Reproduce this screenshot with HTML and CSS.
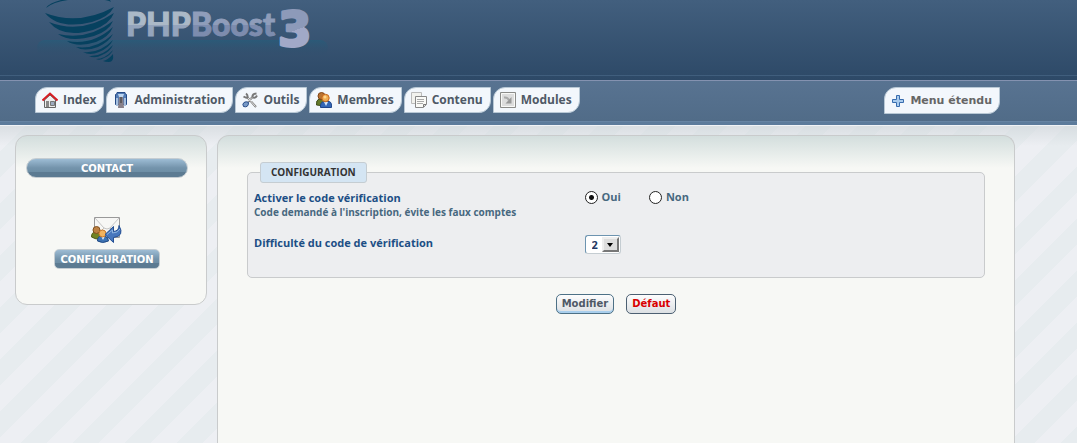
FILE: index.html
```
<!DOCTYPE html>
<html lang="fr">
<head>
<meta charset="utf-8">
<title>PHPBoost 3 - Configuration du contact</title>
<link rel="stylesheet" href="styles.css">
</head>
<body>
<header class="banner">
  <svg class="logo" width="310" height="66" viewBox="0 0 310 66" role="img" aria-label="PHPBoost 3">
    <defs>
      <linearGradient id="php" gradientUnits="userSpaceOnUse" x1="0" y1="12" x2="0" y2="36"><stop offset=".55" stop-color="#abb9c7"/><stop offset=".55" stop-color="#94a4bc"/></linearGradient>
      <linearGradient id="boost" gradientUnits="userSpaceOnUse" x1="0" y1="12" x2="0" y2="36"><stop offset=".55" stop-color="#8f9dba"/><stop offset=".55" stop-color="#7d8cae"/></linearGradient>
      <linearGradient id="three" gradientUnits="userSpaceOnUse" x1="250" y1="9" x2="264" y2="48"><stop offset=".55" stop-color="#8d9ab9"/><stop offset=".55" stop-color="#a1a9c8"/></linearGradient>
      <linearGradient id="glow" x1="0" y1="0" x2="0" y2="1"><stop offset="0" stop-color="#2b5a78"/><stop offset="1" stop-color="#304e6c" stop-opacity="0"/></linearGradient>
    </defs>
    <rect x="0" y="40" width="291" height="16" rx="8" fill="url(#glow)"/>
    <g fill="#06415f">
      <path d="M9 8Q16 2 31 0H24Q12 3 9 8ZM68 0Q73 1 74 2L73 0Z"/>
      <path d="M8 13Q42 26 77 7Q72 17 55 22Q22 30 8 13Z"/>
      <path d="M12 22Q44 35 77 13Q73 24 56 30Q26 39 12 22Z"/>
      <path d="M21 34Q50 41 76 21Q72 31 57 36Q33 43 21 34Z"/>
      <path d="M30 41Q55 46 76 27Q72 37 59 42Q40 48 30 41Z"/>
      <path d="M39 47Q59 50 76 34Q72 42 61 47Q47 52 39 47Z"/>
      <path d="M46 52Q62 54 76 40Q72 48 62 52Q53 56 46 52Z"/>
      <path d="M52 56Q65 57 76 45Q73 52 65 55Q58 59 52 56Z"/>
      <path d="M59 59Q68 59 76 50Q74 55 67 58Q63 61 59 59Z"/>
      <path d="M66 61Q71 60 76 54Q77 62 72 62Q68 62 66 61Z"/>
    </g>
    <text class="logo-name" x="89" y="36"><tspan class="logo-php">PHP</tspan><tspan class="logo-boost">Boost</tspan></text>
    <text class="logo-version" x="241" y="46">3</text>
  </svg>
</header>

<nav class="menu" aria-label="Administration">
  <a class="tab" href="#"><svg width="16" height="16" viewBox="0 0 16 16"><path d="M2.500 8V15.500H13.500V8L8 3Z" fill="#eee" stroke="#666"/><path d="M.5 8.500L8 1.500L15.500 8.500" fill="none" stroke="#d61b22" stroke-width="2"/><path d="M4 9h3v6H4Z" fill="#888"/><path d="M8.500 9.500h4v4h-4Z" fill="#9dabc0" stroke="#777"/></svg>Index</a>
  <a class="tab" href="#"><svg width="16" height="16" viewBox="1 0 16 16"><path d="M3.500 2.500L5 1.500V.5H13V1.500L14.500 2.500V12.500H3.500Z" fill="#527bb5" stroke="#244a87"/><path d="M6 2h6L11 5H7Z" fill="#bcd5f0"/><path d="M4 6h2v8H4ZM12 6h2v8h-2Z" fill="#a5bfdf"/><path d="M7 5h4l1 11H6Z" fill="#87808a"/><path d="M8.500 5h1v6h-1Z" fill="#333"/></svg>Administration</a>
  <a class="tab" href="#"><svg width="16" height="16" viewBox="0 0 16 16"><path d="M1.500 4.500Q4 6 6 6L14 15M4 1.500Q6 3 5.500 5.500M14.500 1.500Q10 2 10.500 5L6 10M10.500 5Q13 7 15 3.500" fill="none" stroke="#777" stroke-width="2"/><path d="M6 6L13.500 14.500M10 5.500L6 9.500" stroke="#e5e5e5"/><path d="M1.500 14.500Q0 12 2 10.500Q4 9 6.500 10.500Q6.500 16 1.500 14.500Z" fill="#789ac7" stroke="#274b88"/></svg>Outils</a>
  <a class="tab" href="#"><svg width="16" height="16" viewBox="0 0 16 16"><path d="M.5 13Q0 8 3 7H7L9 14Z" fill="#657b2b" stroke="#3d4b1a"/><circle cx="5.500" cy="4" r="3.500" fill="#b97332" stroke="#824313"/><path d="M4.500 15.500Q4 10 8 9.500H13Q16 10 15.500 15.500Z" fill="#3366b5" stroke="#20468c"/><path d="M8 10h4l-2 4Z" fill="#d5e5f7"/><circle cx="9.500" cy="6" r="3.700" fill="#efab50" stroke="#c5651d"/><circle cx="9" cy="5" r="1.500" fill="#ffd58b"/></svg>Membres</a>
  <a class="tab" href="#"><svg width="16" height="16" viewBox="0 0 16 16"><path d="M.5 .5h10v11H.5Z" fill="#f2f2ee" stroke="#bbb"/><path d="M4.500 4.500h11v8l-3 3h-8Z" fill="#fafaf7" stroke="#888"/><path d="M6 7.500h7M6 9.500h7M6 11.500h6" stroke="#aaa"/><path d="M12.500 15v-2.500H15" fill="#ddd" stroke="#777"/></svg>Contenu</a>
  <a class="tab" href="#"><svg width="16" height="16" viewBox="0 0 16 16"><path d="M.5 .5h15v15H.5Z" fill="#ddd" stroke="#8b8b89"/><path d="M1.500 1.500h13v13h-13Z" fill="none" stroke="#f9f9f7"/><path d="M4 5.500Q8 5 9 8.500" fill="none" stroke="#aaa" stroke-width="2"/><path d="M11.500 5v6.500H5.500Z" fill="#999"/></svg>Modules</a>
  <a class="tab tab-extended" href="#"><svg width="14" height="14" viewBox="0 0 14 14"><path d="M5.500 1.500h3v4h4v3h-4v4h-3v-4h-4v-3h4Z" fill="#a9cbed" stroke="#386cae"/></svg>Menu étendu</a>
</nav>

<div class="page">
  <aside class="panel sidebar">
    <h2 class="side-title">CONTACT</h2>
    <a class="side-link" href="#">
      <svg width="32" height="27" viewBox="0 0 32 27"><path d="M3.500 .5h25v20h-25Z" fill="#f7f7f5" stroke="#999"/><path d="M4 1l9 10q3 2 6 0L28 1M4 20L13 11M28 20L19 11" fill="none" stroke="#c5c5c5"/><path d="M.5 20q0-5 4-5h3q3 1 2 6.500Q5 23 .5 20Z" fill="#718322" stroke="#4e5b18"/><circle cx="5.500" cy="13" r="3.500" fill="#bd8142" stroke="#80501f"/><path d="M6.500 24q0-5 4-5h3q4 1 4 5q-6 3-11 0Z" fill="#3d73b4" stroke="#214b86"/><path d="M10 19h4l-2 4Z" fill="#e4effa"/><circle cx="11.500" cy="16.500" r="3.500" fill="#f3b45e" stroke="#c77728"/><path d="M14 17.500L22.500 9.500V14.500Q28 14 28 8.500Q34 19 22.500 20.500V25.500Z" fill="#4777bd" stroke="#244f93"/><path d="M16 17.500L21.500 13V16Q27 16 29 12" fill="none" stroke="#8db3df"/></svg>
      <span class="side-button">CONFIGURATION</span>
    </a>
  </aside>

  <main class="panel content">
    <form>
      <fieldset class="settings">
        <legend>CONFIGURATION</legend>
        <div class="setting" role="radiogroup" aria-labelledby="verification">
          <div class="setting-label"><span id="verification">Activer le code vérification</span><small>Code demandé à l'inscription, évite les faux comptes</small></div>
          <div class="choices">
            <label class="choice"><input type="radio" name="code" checked>Oui</label>
            <label class="choice"><input type="radio" name="code">Non</label>
          </div>
        </div>
        <div class="setting">
          <label class="setting-label" for="difficulty">Difficulté du code de vérification</label>
          <div class="picker">
            <select id="difficulty"><option>0</option><option>1</option><option selected>2</option><option>3</option><option>4</option></select>
            <span class="picker-arrow"></span>
          </div>
        </div>
      </fieldset>
      <div class="actions">
        <button class="action action-submit" type="submit">Modifier</button>
        <button class="action action-reset" type="reset">Défaut</button>
      </div>
    </form>
  </main>
</div>
</body>
</html>
```
FILE: styles.css
```
* { box-sizing: border-box; }
body {
  margin: 0;
  min-height: 100vh;
  display: flex;
  flex-direction: column;
  font: bold 11px/14px "Open Sans", "Noto Sans", sans-serif;
  color: #4f5966;
  background: #edeff3;
}
a { color: inherit; text-decoration: none; }
svg { display: block; flex: none; }

.banner {
  height: 80px;
  padding-left: 37px;
  background: linear-gradient(transparent 75px, #405e7d 75px 76px, transparent 76px), linear-gradient(#425f7e, #2d4967);
}
.logo-name { font: 900 32px Lato, sans-serif; stroke-width: 1px; }
.logo-php { fill: url(#php); stroke: url(#php); }
.logo-boost { fill: url(#boost); stroke: url(#boost); }
.logo-version {
  font: bold 48px "DejaVu Sans", sans-serif;
  fill: url(#three);
  stroke: url(#three);
  stroke-width: 3px;
  stroke-linejoin: round;
}

.menu {
  display: flex;
  gap: 2px;
  height: 45px;
  padding: 6px 77px 0 35px;
  border-top: 1px solid #8492b0;
  background: linear-gradient(transparent 40px, #6684a3 40px 41px, #5c7b9b 41px), linear-gradient(#587391, #506b87);
}
.tab {
  display: flex;
  align-items: center;
  gap: 5px;
  height: 26px;
  padding: 0 7px 0 6px;
  border: 1px solid #b8c8d5;
  border-radius: 12px 0;
  background: #f3f7fc;
  font-size: 12px;
}
.tab-extended {
  height: 27px;
  margin-left: auto;
  font: bold 11px/14px "DejaVu Sans", sans-serif;
  color: #666;
}

.page {
  flex: 1;
  display: flex;
  align-items: flex-start;
  gap: 10px;
  padding: 9px 62px 0 15px;
  border-top: 1px solid #f0f3f6;
  background:
    linear-gradient(rgba(205, 212, 216, .6), rgba(205, 212, 216, 0) 20px),
    linear-gradient(135deg, #e7ecef 25%, #edeff3 25% 50%, #e7ecef 50% 75%, #edeff3 75%) 25px 0 / 52px 52px;
}
.panel {
  border: 1px solid #c9cbcc;
  border-radius: 12px;
  background: linear-gradient(#d3dedd, #f7f8f5 32px);
}
.sidebar {
  width: 192px;
  height: 170px;
  padding: 22px 18px 0 10px;
}
.side-title, .side-button {
  margin: 0;
  height: 20px;
  border: 1px solid #c5cdd2;
  background: linear-gradient(#9dbcd4, #7393ab 50%, #6e8fa6 70%, #5c7b92 70%);
  font: bold 10px/20px "DejaVu Sans", sans-serif;
  color: #fff;
  text-align: center;
}
.side-title { border-radius: 10px; }
.side-link {
  display: flex;
  flex-direction: column;
  align-items: center;
  gap: 5px;
  margin-top: 39px;
}
.side-button { padding: 0 5px; border-radius: 5px; }

.content {
  flex: 1;
  align-self: stretch;
  padding: 26px 29px 0;
  border-bottom: 0;
  border-radius: 12px 12px 0 0;
}
.settings {
  margin: 0;
  padding: 0 6px 23px;
  border: 1px solid #c9cbcc;
  border-radius: 5px;
  background: #edeef0;
}
.settings legend {
  height: 21px;
  margin-left: 6px;
  padding: 0 10px;
  border: 1px solid #c5cdd2;
  border-radius: 3px;
  background: #d4e5f3;
  color: #333;
  font-size: 10px;
  line-height: 19px;
}
.setting {
  display: grid;
  grid-template-columns: 331fr 394fr;
  align-items: start;
  margin-top: 7px;
  color: #1c4e85;
}
.setting + .setting { margin-top: 16px; }
.setting .setting-label { padding-top: 1px; }
.setting-label small { display: block; font-size: 10px; color: #47687f; }
.choices { display: flex; gap: 28px; }
.choice { display: flex; align-items: center; gap: 4px; color: #47687f; }
.choice input {
  appearance: none;
  width: 13px;
  height: 13px;
  margin: 0;
  border: 1px solid #222;
  border-radius: 50%;
  background: #fff;
}
.choice input:checked { background: radial-gradient(circle, #111 2px, #fff 3px); }
.picker { display: grid; width: 36px; }
.picker select {
  grid-area: 1 / 1;
  appearance: none;
  height: 19px;
  padding: 0 6px;
  border: 1px solid #c5cdd2;
  border-color: #6d94b0 #c5cdd2 #c5cdd2 #6d94b0;
  border-radius: 3px;
  background: #fff;
  color: #233763;
  font: inherit;
}
.picker-arrow {
  grid-area: 1 / 1;
  justify-self: end;
  align-self: center;
  display: grid;
  place-items: center;
  width: 17px;
  height: 15px;
  margin-right: 2px;
  border: 2px solid #777;
  border-top-color: #eee;
  border-left-color: #eee;
  background: #ddd;
  pointer-events: none;
}
.picker-arrow::before {
  content: "";
  border: solid transparent;
  border-width: 4px 3px 0;
  border-top-color: #000;
}
.actions { display: flex; justify-content: center; gap: 12px; margin-top: 16px; }
.action {
  height: 20px;
  padding: 0 5px;
  border: 1px solid #4c6072;
  border-radius: 5px;
  background: linear-gradient(#fdfdfd, #dce0e3);
  font: bold 10px/18px "DejaVu Sans", sans-serif;
  color: #4f5966;
}
.action-submit { border-color: #4d7186; box-shadow: inset 0 -2px #a9cfed; }
.action-reset { color: #d90000; }
```
